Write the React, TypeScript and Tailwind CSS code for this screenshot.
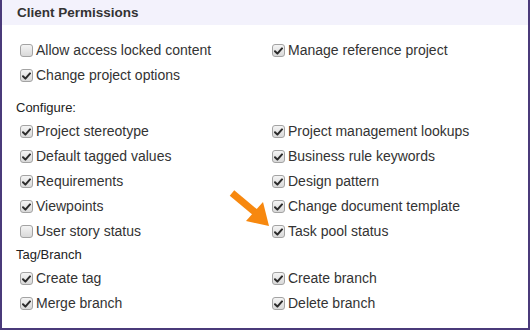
import React from 'react';

type Item = { label: string; checked: boolean };

const Checkbox: React.FC<{ checked: boolean }> = ({ checked }) => (
  <span className="relative inline-flex h-[13px] w-[13px] shrink-0 items-center justify-center rounded-[3px] border border-[#a3a3a3] bg-gradient-to-b from-[#f4f4f4] to-[#d9d9d9]">
    {checked && (
      <svg width="9" height="8" viewBox="0 0 9 8" className="block">
        <path d="M1 4.2 L3.4 6.6 L8 1.4" fill="none" stroke="#2b2b2b" strokeWidth="2" strokeLinecap="round" strokeLinejoin="round" />
      </svg>
    )}
  </span>
);

const Row: React.FC<Item> = ({ label, checked }) => (
  <label className="flex h-[25px] items-center gap-[3px] text-[14px] text-[#333]">
    <Checkbox checked={checked} />
    <span>{label}</span>
  </label>
);

const Grid: React.FC<{ items: Item[] }> = ({ items }) => (
  <div className="grid grid-cols-[252px_1fr] pl-[18px]">
    {items.map((it) => (
      <Row key={it.label} {...it} />
    ))}
  </div>
);

const general: Item[] = [
  { label: 'Allow access locked content', checked: false },
  { label: 'Manage reference project', checked: true },
  { label: 'Change project options', checked: true },
];

const configure: Item[] = [
  { label: 'Project stereotype', checked: true },
  { label: 'Project management lookups', checked: true },
  { label: 'Default tagged values', checked: true },
  { label: 'Business rule keywords', checked: true },
  { label: 'Requirements', checked: true },
  { label: 'Design pattern', checked: true },
  { label: 'Viewpoints', checked: true },
  { label: 'Change document template', checked: true },
  { label: 'User story status', checked: false },
  { label: 'Task pool status', checked: true },
];

const tagBranch: Item[] = [
  { label: 'Create tag', checked: true },
  { label: 'Create branch', checked: true },
  { label: 'Merge branch', checked: true },
  { label: 'Delete branch', checked: true },
];

export default function App() {
  return (
    <div
      className="relative h-[330px] w-[530px] overflow-hidden bg-white"
      style={{ fontFamily: '"Liberation Sans", Arial, sans-serif' }}
    >
      <div className="flex h-full flex-col border-x-2 border-b-2 border-[#4a3a7a]">
        {/* Header */}
        <div className="flex h-[25px] items-center bg-[#f3f2fc] pl-[15px] pt-[1px] text-[13.5px] font-bold text-[#333]">
          Client Permissions
        </div>

        <div className="pt-[13px]">
          <Grid items={general} />
        </div>

        <div className="mt-[8px] flex h-[23px] items-center pl-[14px] text-[13px] text-[#222]">Configure:</div>
        <Grid items={configure} />

        <div className="flex h-[22px] items-center pl-[14px] text-[13px] text-[#222]">Tag/Branch</div>
        <Grid items={tagBranch} />
      </div>

      {/* Callout arrow */}
      <svg className="pointer-events-none absolute left-0 top-0" width="530" height="330">
        <line x1="232" y1="193" x2="256" y2="213" stroke="#f7880f" strokeWidth="7" />
        <polygon points="269,226 246,221 263,202" fill="#f7880f" />
      </svg>
    </div>
  );
}
